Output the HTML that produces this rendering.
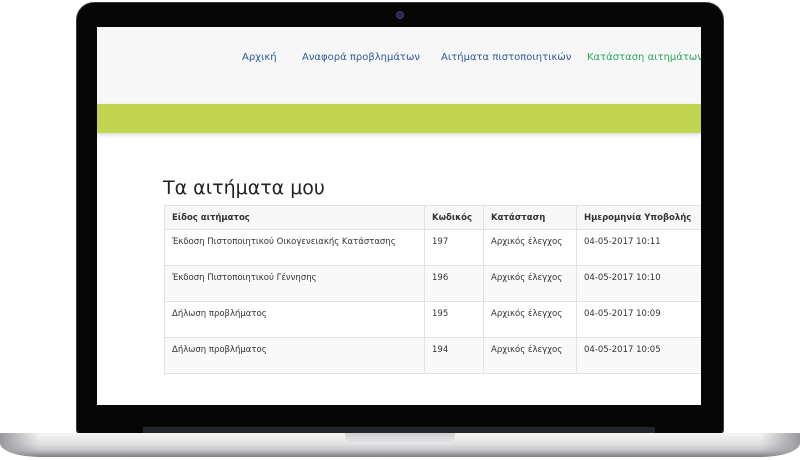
<!DOCTYPE html>
<html><head><meta charset="utf-8"><style>
*{margin:0;padding:0;box-sizing:border-box}
body{width:800px;height:460px;background:#fff;position:relative;overflow:hidden;font-family:Verdana,"DejaVu Sans",sans-serif}
.bezel{position:absolute;left:76px;top:2px;width:648px;height:432px;background:#060606;border-radius:18px 18px 4px 4px;border:1px solid #3a3a3a}
.hinge{position:absolute;left:143px;top:427px;width:512px;height:7px;background:#22262b}
.cam{position:absolute;left:396px;top:11px;width:8px;height:8px;border-radius:50%;background:#2a2a3a;box-shadow:inset 0 0 2px #6040c0}
.base{position:absolute;left:0;top:433px;width:800px;height:24px;border-radius:2px 2px 40px 40px/2px 2px 14px 14px;background:linear-gradient(#f4f4f4 0,#e2e2e4 45%,#c9c9cc 70%,#7b7b80 100%)}
.base:before{content:"";position:absolute;left:0;top:0;width:40px;height:100%;background:linear-gradient(90deg,#9a9a9e,rgba(230,230,230,0));border-radius:0 0 0 40px/0 0 0 14px}
.base:after{content:"";position:absolute;right:0;top:0;width:40px;height:100%;background:linear-gradient(270deg,#9a9a9e,rgba(230,230,230,0));border-radius:0 0 40px 0/0 0 14px 0}
.notch{position:absolute;left:345px;top:433px;width:110px;height:11px;background:linear-gradient(#d0d0d2,#e8e8ea);border-radius:0 0 10px 10px}
.screen{position:absolute;left:97px;top:27px;width:604px;height:378px;background:#fff;overflow:hidden}
.nav{position:absolute;left:0;top:0;width:604px;height:77px;background:#f7f7f7}
.nav span{position:absolute;top:25px;font-size:10px;color:#2a5c9a;white-space:nowrap;font-family:"DejaVu Sans",sans-serif}
.green{position:absolute;left:0;top:77px;width:604px;height:29px;background:#c1d550;box-shadow:0 2px 4px rgba(0,0,0,.15)}
h1{position:absolute;left:66px;top:150px;font-weight:normal;font-size:19px;color:#222;font-family:"DejaVu Sans",sans-serif}
table{position:absolute;left:67px;top:178px;border-collapse:collapse;table-layout:fixed;width:560px;font-size:8.5px;color:#333;font-family:"DejaVu Sans",sans-serif}
td,th{border:1px solid #e2e2e2;text-align:left;vertical-align:top;padding:7px 7px 0;white-space:nowrap;overflow:hidden}
th{height:24px;font-weight:bold;background:#f7f7f7}
td{height:36px}
tr:nth-child(odd) td{background:#f9f9f9}
</style></head><body>
<div class="bezel"></div>
<div class="cam"></div>
<div class="hinge"></div>
<div class="base"></div>
<div class="notch"></div>
<div class="screen">
<div class="nav">
<span style="left:145px">Αρχική</span>
<span style="left:205px">Αναφορά προβλημάτων</span>
<span style="left:344px">Αιτήματα πιστοποιητικών</span>
<span style="left:490px;color:#2aa45a">Κατάσταση αιτημάτων &amp; προβλημάτων</span>
</div>
<div class="green"></div>
<h1>Τα αιτήματα μου</h1>
<table>
<colgroup><col style="width:260px"><col style="width:59px"><col style="width:93px"><col style="width:148px"></colgroup>
<tr><th>Είδος αιτήματος</th><th>Κωδικός</th><th>Κατάσταση</th><th>Ημερομηνία Υποβολής</th></tr>
<tr><td>Έκδοση Πιστοποιητικού Οικογενειακής Κατάστασης</td><td>197</td><td>Αρχικός έλεγχος</td><td>04-05-2017 10:11</td></tr>
<tr><td>Έκδοση Πιστοποιητικού Γέννησης</td><td>196</td><td>Αρχικός έλεγχος</td><td>04-05-2017 10:10</td></tr>
<tr><td>Δήλωση προβλήματος</td><td>195</td><td>Αρχικός έλεγχος</td><td>04-05-2017 10:09</td></tr>
<tr><td>Δήλωση προβλήματος</td><td>194</td><td>Αρχικός έλεγχος</td><td>04-05-2017 10:05</td></tr>
</table>
</div>
</body></html>
